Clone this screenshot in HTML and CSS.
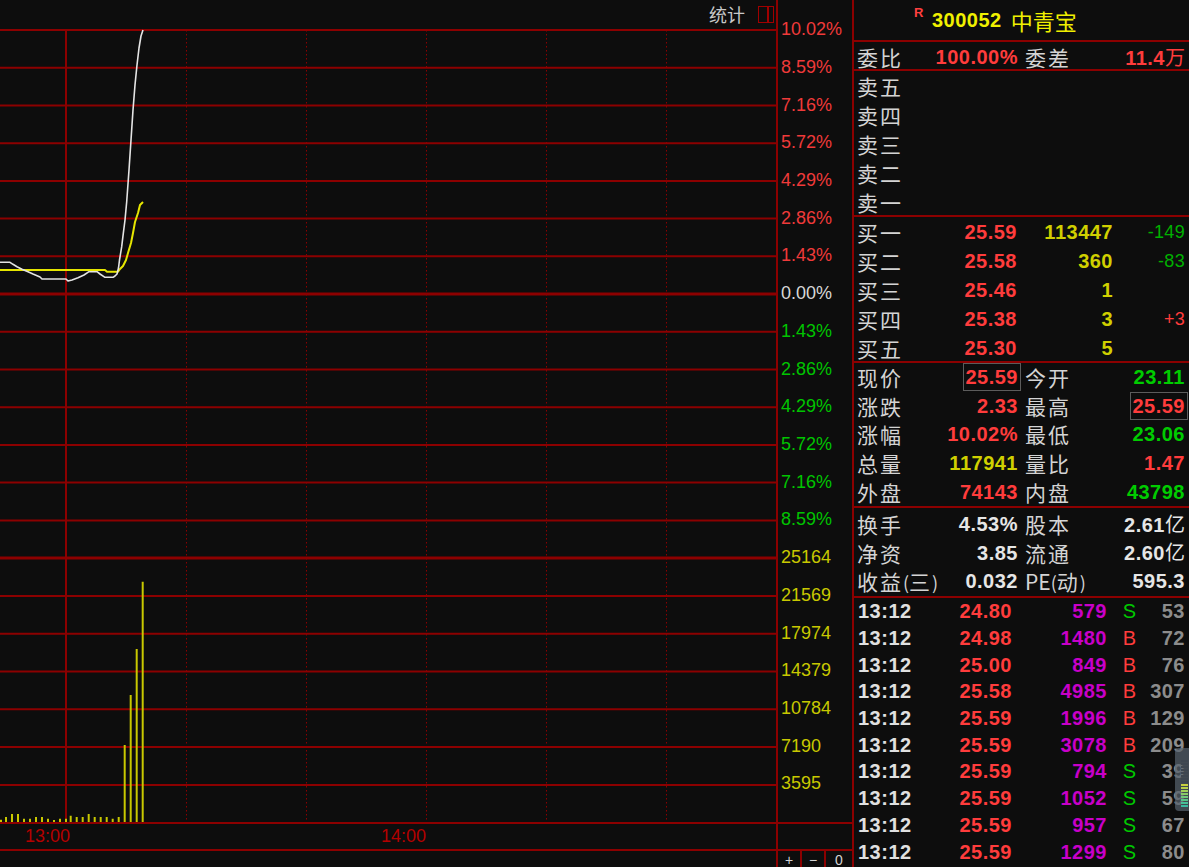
FILE: index.html
```html
<!DOCTYPE html>
<html lang="zh-CN">
<head>
<meta charset="utf-8">
<title>300052 中青宝 分时</title>
<link rel="stylesheet" href="styles.css">
</head>
<body>
<div class="app">
  <section class="left">
    <div class="plot">
      <svg class="chart" viewBox="0 0 776 822" width="776" height="822">
        <path class="gh" d="M0 30H776M0 67.7H776M0 105.4H776M0 143.2H776M0 180.9H776M0 218.6H776M0 256.3H776M0 331.8H776M0 369.5H776M0 407.2H776M0 444.9H776M0 482.6H776M0 520.4H776M0 595.9H776M0 633.7H776M0 671.5H776M0 709.3H776M0 747.1H776M0 784.9H776"/>
        <path class="gh thick" d="M0 294H776M0 558.1H776"/>
        <path class="gv" d="M66 30V822"/>
        <path class="gd" d="M186.5 30V822M306.5 30V822M426.5 30V822M546.5 30V822M666.5 30V822"/>
        <path class="vol" d="M1 822V819.7M6 822V817M12 822V814M18 822V814M24 822V818.7M30 822V818.7M36 822V817M42 822V817M48 822V818.7M54 822V820M60 822V818.7M66 822V818.7M70.7 822V815.7M76.7 822V817M82.7 822V817M88.7 822V814M94.7 822V817M100.7 822V817M106.7 822V817M112.7 822V818.7M118.7 822V817M124.7 822V745M130.7 822V695M136.7 822V649M142.7 822V581.7"/>
        <path class="avg" d="M0 270L105 270L107 271.7L118 271.7L120 269L123 266L126 260L128 253L131 243L133 233L135 222L138 213L140 205L143 202"/>
        <path class="price" d="M0 262.3L10 262.3L13 264.3L17 266.7L22 269.3L28 271.7L33 274L40 277L42 279L66 279L68 281L72 280L78 277.7L84 275L89 271.7L97 271.7L100 274L105 277.3L113 277.3L115 276L117 274L118.5 268L119.5 260L121.7 246.7L123.3 233.3L125 220L126.7 201.7L129 170L131 140L133 110L135 85L137 65L139 48L141 36L143 30"/>
      </svg>
      <div class="chart-tools">
        <span class="stat-label">统计</span>
        <span class="win-icon"></span>
      </div>
      <div class="axis">
        <div class="tick up">10.02%</div>
        <div class="tick up">8.59%</div>
        <div class="tick up">7.16%</div>
        <div class="tick up">5.72%</div>
        <div class="tick up">4.29%</div>
        <div class="tick up">2.86%</div>
        <div class="tick up">1.43%</div>
        <div class="tick flat">0.00%</div>
        <div class="tick down">1.43%</div>
        <div class="tick down">2.86%</div>
        <div class="tick down">4.29%</div>
        <div class="tick down">5.72%</div>
        <div class="tick down">7.16%</div>
        <div class="tick down">8.59%</div>
        <div class="tick vol">25164</div>
        <div class="tick vol">21569</div>
        <div class="tick vol">17974</div>
        <div class="tick vol">14379</div>
        <div class="tick vol">10784</div>
        <div class="tick vol">7190</div>
        <div class="tick vol">3595</div>
      </div>
    </div>
    <div class="time-row">
      <div class="time-track">
        <span class="time t1300">13:00</span>
        <span class="time t1400">14:00</span>
      </div>
      <div class="time-pad"></div>
    </div>
    <div class="btn-row">
      <div class="btn-spacer"></div>
      <div class="zbtn">+</div>
      <div class="zbtn">−</div>
      <div class="zbtn wide">0</div>
    </div>
  </section>

  <section class="right">
    <header class="title">
      <span class="r-mark">R</span>
      <span class="code">300052</span>
      <span class="name">中青宝</span>
    </header>

    <div class="wei">
      <div class="half h1"><span class="lbl">委比</span><span class="num red">100.00%</span></div>
      <div class="half h2"><span class="lbl">委差</span><span class="num red">11.4<span class="unit">万</span></span></div>
    </div>

    <div class="book">
      <div class="brow"><span class="lbl">卖五</span></div>
      <div class="brow"><span class="lbl">卖四</span></div>
      <div class="brow"><span class="lbl">卖三</span></div>
      <div class="brow"><span class="lbl">卖二</span></div>
      <div class="brow"><span class="lbl">卖一</span></div>
    </div>

    <div class="book">
      <div class="brow"><span class="lbl">买一</span><span class="num red">25.59</span><span class="num yel">113447</span><span class="chg grn">-149</span></div>
      <div class="brow"><span class="lbl">买二</span><span class="num red">25.58</span><span class="num yel">360</span><span class="chg grn">-83</span></div>
      <div class="brow"><span class="lbl">买三</span><span class="num red">25.46</span><span class="num yel">1</span><span class="chg"></span></div>
      <div class="brow"><span class="lbl">买四</span><span class="num red">25.38</span><span class="num yel">3</span><span class="chg red">+3</span></div>
      <div class="brow"><span class="lbl">买五</span><span class="num red">25.30</span><span class="num yel">5</span><span class="chg"></span></div>
    </div>

    <div class="stats">
      <div class="srow">
        <div class="half h1"><span class="lbl">现价</span><span class="num red boxed">25.59</span></div>
        <div class="half h2"><span class="lbl">今开</span><span class="num grn">23.11</span></div>
      </div>
      <div class="srow">
        <div class="half h1"><span class="lbl">涨跌</span><span class="num red">2.33</span></div>
        <div class="half h2"><span class="lbl">最高</span><span class="num red boxed">25.59</span></div>
      </div>
      <div class="srow">
        <div class="half h1"><span class="lbl">涨幅</span><span class="num red">10.02%</span></div>
        <div class="half h2"><span class="lbl">最低</span><span class="num grn">23.06</span></div>
      </div>
      <div class="srow">
        <div class="half h1"><span class="lbl">总量</span><span class="num yel">117941</span></div>
        <div class="half h2"><span class="lbl">量比</span><span class="num red">1.47</span></div>
      </div>
      <div class="srow">
        <div class="half h1"><span class="lbl">外盘</span><span class="num red">74143</span></div>
        <div class="half h2"><span class="lbl">内盘</span><span class="num grn">43798</span></div>
      </div>
    </div>

    <div class="stats2">
      <div class="srow">
        <div class="half h1"><span class="lbl">换手</span><span class="num wht">4.53%</span></div>
        <div class="half h2"><span class="lbl">股本</span><span class="num wht">2.61<span class="unit">亿</span></span></div>
      </div>
      <div class="srow">
        <div class="half h1"><span class="lbl">净资</span><span class="num wht">3.85</span></div>
        <div class="half h2"><span class="lbl">流通</span><span class="num wht">2.60<span class="unit">亿</span></span></div>
      </div>
      <div class="srow">
        <div class="half h1"><span class="lbl">收益<span class="paren">(</span>三<span class="paren">)</span></span><span class="num wht">0.032</span></div>
        <div class="half h2"><span class="lbl"><span class="latin">PE</span><span class="paren">(</span>动<span class="paren">)</span></span><span class="num wht">595.3</span></div>
      </div>
    </div>

    <div class="ticks">
      <div class="trow"><span class="tm">13:12</span><span class="tp">24.80</span><span class="tv">579</span><span class="bs s">S</span><span class="tc">53</span></div>
      <div class="trow"><span class="tm">13:12</span><span class="tp">24.98</span><span class="tv">1480</span><span class="bs b">B</span><span class="tc">72</span></div>
      <div class="trow"><span class="tm">13:12</span><span class="tp">25.00</span><span class="tv">849</span><span class="bs b">B</span><span class="tc">76</span></div>
      <div class="trow"><span class="tm">13:12</span><span class="tp">25.58</span><span class="tv">4985</span><span class="bs b">B</span><span class="tc">307</span></div>
      <div class="trow"><span class="tm">13:12</span><span class="tp">25.59</span><span class="tv">1996</span><span class="bs b">B</span><span class="tc">129</span></div>
      <div class="trow"><span class="tm">13:12</span><span class="tp">25.59</span><span class="tv">3078</span><span class="bs b">B</span><span class="tc">209</span></div>
      <div class="trow"><span class="tm">13:12</span><span class="tp">25.59</span><span class="tv">794</span><span class="bs s">S</span><span class="tc">39</span></div>
      <div class="trow"><span class="tm">13:12</span><span class="tp">25.59</span><span class="tv">1052</span><span class="bs s">S</span><span class="tc">59</span></div>
      <div class="trow"><span class="tm">13:12</span><span class="tp">25.59</span><span class="tv">957</span><span class="bs s">S</span><span class="tc">67</span></div>
      <div class="trow"><span class="tm">13:12</span><span class="tp">25.59</span><span class="tv">1299</span><span class="bs s">S</span><span class="tc">80</span></div>
    </div>
  </section>
</div>

<div class="meter">
  <i class="lv off"></i><i class="lv off"></i><i class="lv off"></i><i class="lv off"></i>
  <i class="lv off"></i><i class="lv off"></i><i class="lv off"></i><i class="lv off"></i>
  <i class="lv l1"></i><i class="lv l2"></i><i class="lv l3"></i><i class="lv l4"></i>
  <i class="lv l5"></i><i class="lv l6"></i><i class="lv l7"></i><i class="lv l8"></i>
</div>
</body>
</html>
```

FILE: styles.css
```css
* { box-sizing: border-box; margin: 0; padding: 0; }

html, body { background: #0d0d0d; }

body {
  width: 1189px;
  height: 867px;
  overflow: hidden;
  position: relative;
  font-family: "Liberation Sans", Arial, sans-serif;
  color: #d4d4d4;
}

.app { display: flex; height: 867px; }

/* ---------- left: intraday chart ---------- */
.left {
  width: 854px;
  flex: none;
  border-right: 2px solid #8c0000;
  display: flex;
  flex-direction: column;
}

.plot { height: 822px; display: flex; position: relative; flex: none; }

.chart { display: block; width: 776px; height: 822px; flex: none; }

.gh { stroke: #8c0000; stroke-width: 2; fill: none; }
.gh.thick { stroke-width: 3; }
.gv { stroke: #8c0000; stroke-width: 2; fill: none; }
.gd { stroke: #8c0000; stroke-width: 1; stroke-dasharray: 1.5 2.5; fill: none; }
.vol { stroke: #c8c800; stroke-width: 2; fill: none; }
.avg { stroke: #e6e600; stroke-width: 2; fill: none; stroke-linejoin: round; }
.price { stroke: #e4e4e4; stroke-width: 1.6; fill: none; stroke-linejoin: round; }

.chart-tools {
  position: absolute;
  left: 709px;
  top: 4px;
  display: flex;
  align-items: center;
}
.stat-label {
  font-family: "Noto Sans CJK SC", sans-serif;
  font-size: 18px;
  line-height: 20px;
  color: #c8c8c8;
}
.win-icon {
  position: relative;
  width: 16px;
  height: 17px;
  margin-left: 13px;
  border: 1.5px solid #a00000;
}
.win-icon::after {
  content: "";
  position: absolute;
  left: 8px;
  top: 0;
  bottom: 0;
  width: 1.5px;
  background: #a00000;
}

.axis {
  width: 76px;
  flex: none;
  border-left: 2px solid #8c0000;
  padding-top: 11.1px;
  font-size: 18px;
}
.tick { height: 37.72px; line-height: 37.72px; padding-left: 3px; white-space: nowrap; }
.tick.up { color: #f03a3a; }
.tick.flat { color: #d8d8d8; }
.tick.down { color: #00c400; }
.tick.vol { color: #c8c800; }

.time-row {
  height: 29px;
  flex: none;
  display: flex;
  border-top: 2px solid #8c0000;
  border-bottom: 2px solid #8c0000;
}
.time-track { width: 776px; position: relative; }
.time-pad { width: 76px; border-left: 2px solid #8c0000; }
.time {
  position: absolute;
  top: 0;
  line-height: 25px;
  font-size: 18px;
  color: #b40000;
}
.t1300 { left: 25px; }
.t1400 { left: 381px; }

.btn-row { height: 16px; flex: none; display: flex; }
.btn-spacer { width: 776px; }
.zbtn {
  width: 24px;
  border-left: 2px solid #8c0000;
  color: #d4d4d4;
  font-size: 14px;
  line-height: 14px;
  padding-top: 2px;
  text-align: center;
}
.zbtn.wide { width: 28px; }

/* ---------- right: quote panel ---------- */
.right { width: 335px; flex: none; display: flex; flex-direction: column; }

.title {
  height: 42px;
  flex: none;
  border-bottom: 2px solid #8c0000;
  display: flex;
  align-items: center;
  padding-left: 60px;
}
.r-mark {
  width: 18px;
  align-self: flex-start;
  margin-top: 5px;
  font-weight: bold;
  font-size: 13px;
  color: #ff4040;
}
.code {
  font-weight: bold;
  font-size: 20px;
  letter-spacing: 0.5px;
  color: #f0f000;
}
.name {
  margin-left: 9px;
  font-family: "Noto Sans CJK SC", sans-serif;
  font-size: 22px;
  line-height: 26px;
  color: #f0f000;
}

.lbl {
  font-family: "Noto Sans CJK SC", sans-serif;
  font-size: 21px;
  line-height: 24px;
  letter-spacing: 2px;
  color: #d4d4d4;
  white-space: nowrap;
}
.paren { letter-spacing: 0; font-size: 18px; }
.latin { letter-spacing: 0; }

.num {
  font-weight: bold;
  font-size: 20px;
  line-height: 24px;
  letter-spacing: 0.5px;
  white-space: nowrap;
}
.unit {
  font-family: "Noto Sans CJK SC", sans-serif;
  font-weight: normal;
  font-size: 20px;
  letter-spacing: 0;
}

.red { color: #ff3c3c; }
.yel { color: #d0d000; }
.grn { color: #00cc00; }
.wht { color: #e6e6e6; }

.half { display: flex; justify-content: space-between; align-items: center; }
.h1 { width: 161px; }
.h2 { width: 160px; margin-left: 7px; }

.wei {
  height: 29px;
  flex: none;
  display: flex;
  align-items: center;
  padding: 3px 0 0 3px;
  border-bottom: 2px solid #8c0000;
}

.book {
  height: 146px;
  flex: none;
  padding-left: 3px;
  border-bottom: 2px solid #8c0000;
  display: flex;
  flex-direction: column;
}
.brow {
  height: 28.8px;
  display: grid;
  grid-template-columns: 60px 100px 96px 72px;
  align-items: center;
  padding-top: 2px;
}
.brow .num, .brow .chg { text-align: right; }
.chg { font-size: 18px; line-height: 24px; letter-spacing: 0.3px; }
.chg.grn { color: #00b000; }

.stats {
  height: 145px;
  flex: none;
  border-bottom: 2px solid #8c0000;
  padding-left: 3px;
  display: flex;
  flex-direction: column;
}
.srow { height: 28.6px; display: flex; align-items: center; }

.boxed {
  border: 1px solid #5c5c5c;
  padding: 1px 2px 1px 1px;
  margin-right: -3px;
}

.stats2 {
  height: 90px;
  flex: none;
  border-bottom: 2px solid #8c0000;
  padding: 2px 0 0 3px;
  display: flex;
  flex-direction: column;
}

.ticks { flex: 1; display: flex; flex-direction: column; padding-left: 4px; }
.trow {
  height: 26.7px;
  flex: none;
  display: grid;
  grid-template-columns: 60px 94px 95px 30px 48px;
  align-items: center;
  font-size: 20px;
  line-height: 24px;
  white-space: nowrap;
}
.tm { font-weight: bold; color: #e0e0e0; letter-spacing: 0.5px; }
.tp { font-weight: bold; color: #ff3c3c; text-align: right; letter-spacing: 0.5px; }
.tv { font-weight: bold; color: #c800c8; text-align: right; letter-spacing: 0.5px; }
.bs { text-align: right; padding-right: 1px; }
.bs.s { color: #00c800; }
.bs.b { color: #ff3c3c; }
.tc { font-weight: bold; color: #8c8c8c; text-align: right; letter-spacing: 0.5px; }

/* small floating level meter overlay */
.meter {
  position: absolute;
  left: 1175px;
  top: 748px;
  width: 16px;
  height: 63px;
  border-radius: 4px 0 0 4px;
  background: rgba(88, 98, 110, 0.72);
  padding: 12px 0 0 6px;
  display: flex;
  flex-direction: column;
  gap: 1px;
}
.lv { display: block; width: 7px; height: 2px; }
.lv.off { background: #3e4650; }
.lv.l1 { background: #c8d040; }
.lv.l2 { background: #b8d048; }
.lv.l3 { background: #a0d058; }
.lv.l4 { background: #88cc68; }
.lv.l5 { background: #70c878; }
.lv.l6 { background: #58c488; }
.lv.l7 { background: #48c098; }
.lv.l8 { background: #3cb8a0; }
```
